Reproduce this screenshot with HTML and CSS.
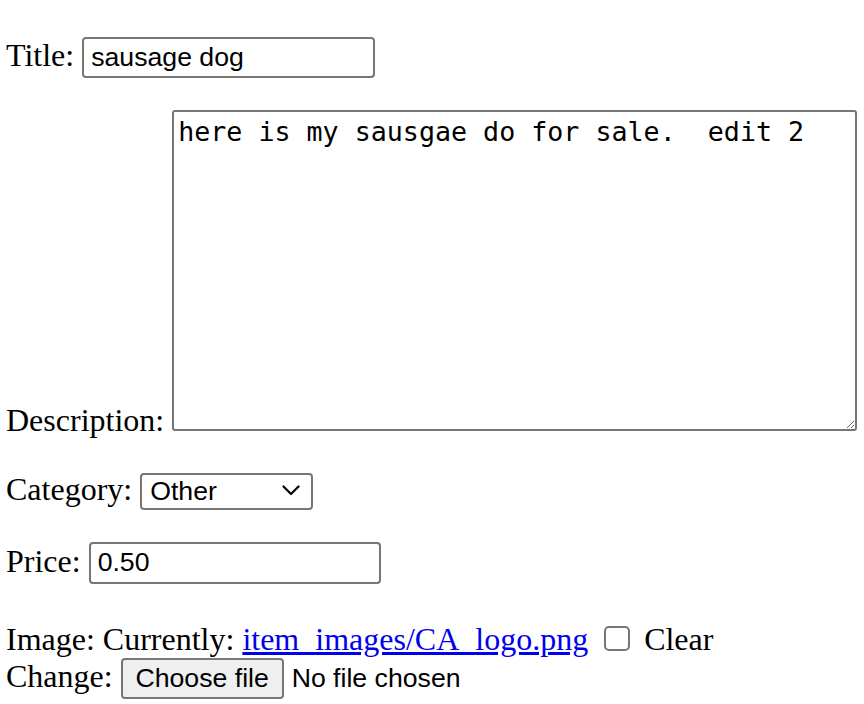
FILE: index.html
```html
<!DOCTYPE html>
<html>
<head>
<meta charset="utf-8">
<link rel="stylesheet" href="styles.css">
</head>
<body>
<form class="item-form">
  <p class="row row-title"><label for="id_title">Title:</label> <input class="field text-field title-field" type="text" id="id_title" value="sausage dog"></p>
  <p class="row row-desc"><label for="id_description">Description:</label> <textarea class="field desc-field" id="id_description">here is my sausgae do for sale.  edit 2</textarea></p>
  <p class="row row-cat"><label for="id_category">Category:</label> <span class="select-wrap"><select class="field select-field" id="id_category"><option>Other</option></select><svg class="chevron" width="18" height="11" viewBox="0 0 18 11"><path d="M1.5 1.5 L9 9 L16.5 1.5" fill="none" stroke="#000" stroke-width="2.2" stroke-linecap="round" stroke-linejoin="round"/></svg></span></p>
  <p class="row row-price"><label for="id_price">Price:</label> <input class="field text-field price-field" type="text" id="id_price" value="0.50"></p>
  <p class="row row-image"><label for="id_image">Image:</label> Currently: <a class="file-link" href="#">item_images/CA_logo.png</a> <input class="check" type="checkbox" id="image-clear_id"> <label for="image-clear_id">Clear</label><br>
  Change: <span class="file-input"><button type="button" class="file-btn">Choose file</button><span class="file-status">No file chosen</span></span></p>
</form>
</body>
</html>
```
FILE: styles.css
```css
html, body {
  background: #fff;
}
body {
  margin: 0 0 0 6px;
  font-family: "Liberation Serif", "Times New Roman", serif;
  font-size: 32px;
  color: #000;
}
.item-form {
  padding-top: 5px;
}
.row {
  margin: 32px 0;
}
.row-image {
  margin-top: 37px;
  line-height: 37px;
}
.field {
  font-family: "Liberation Sans", Arial, sans-serif;
  font-size: 26.67px;
  color: #000;
  border: 2px solid #767676;
  border-radius: 4px;
  background: #fff;
  box-sizing: border-box;
  margin: 0;
  outline: none;
}
.text-field {
  height: 41px;
  padding: 2px 7px;
}
.title-field {
  width: 293px;
}
.price-field {
  width: 292px;
  height: 42px;
}
.desc-field {
  font-family: "DejaVu Sans Mono", monospace;
  font-size: 26.67px;
  width: 685px;
  height: 321px;
  padding: 4px 4px;
  border-radius: 3px;
  resize: both;
  vertical-align: baseline;
  line-height: normal;
}
.select-wrap {
  position: relative;
  display: inline-block;
}
.select-field {
  -webkit-appearance: none;
  appearance: none;
  width: 173px;
  height: 37px;
  padding: 0 8px;
}
.chevron {
  position: absolute;
  right: 13px;
  top: 14px;
  pointer-events: none;
}
.file-link {
  color: #0000ee;
  text-decoration: underline;
}
.check {
  -webkit-appearance: none;
  appearance: none;
  width: 26px;
  height: 25px;
  border: 2px solid #767676;
  border-radius: 5px;
  background: #fff;
  margin: 0 6px 0 8px;
  box-sizing: border-box;
  vertical-align: -1px;
}
.file-input {
  display: inline-block;
}
.file-btn {
  font-family: "Liberation Sans", Arial, sans-serif;
  font-size: 26.67px;
  color: #000;
  background: #efefef;
  border: 2px solid #767676;
  border-radius: 4px;
  height: 41px;
  width: 163px;
  padding: 0;
  margin: 0 8px 0 0;
  box-sizing: border-box;
}
.file-status {
  font-family: "Liberation Sans", Arial, sans-serif;
  font-size: 26.67px;
}
```
